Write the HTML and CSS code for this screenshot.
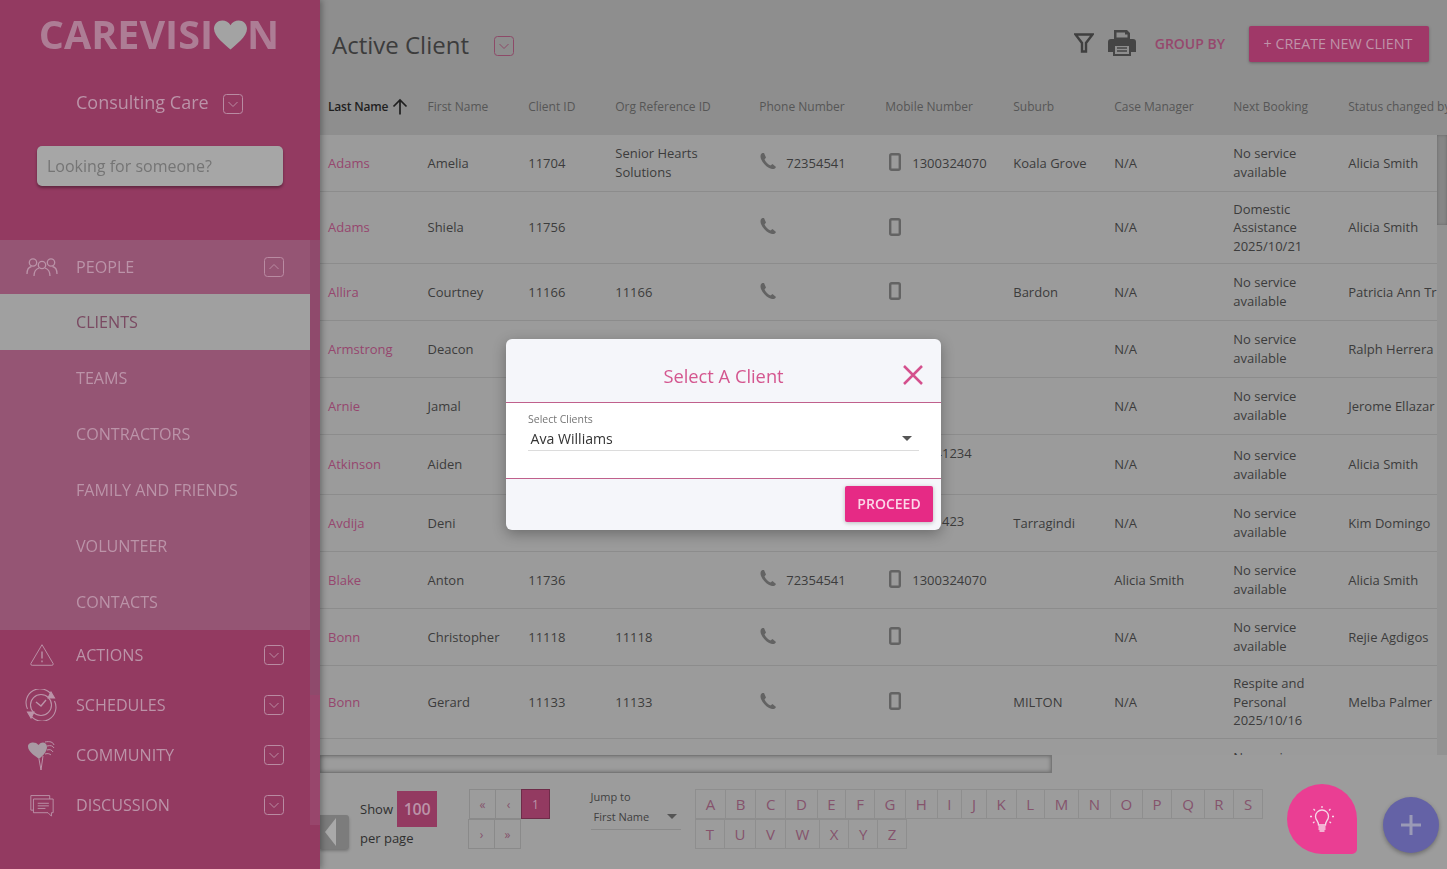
FILE: index.html
```html
<!DOCTYPE html>
<html lang="en">
<head>
<meta charset="utf-8">
<title>Active Client</title>
<link rel="stylesheet" href="styles.css">
</head>
<body>
<svg class="defs" width="0" height="0" aria-hidden="true">
  <symbol id="down" viewBox="0 0 20 20"><rect x=".5" y=".5" width="19" height="19" rx="3" fill="none" stroke="currentColor"/><path d="M5.5 8l4.500 4.500 4.500-4.500" fill="none" stroke="currentColor"/></symbol>
  <symbol id="up" viewBox="0 0 20 20"><rect x=".5" y=".5" width="19" height="19" rx="3" fill="none" stroke="currentColor"/><path d="M5.500 12l4.500-4.500 4.500 4.500" fill="none" stroke="currentColor"/></symbol>
  <symbol id="phone" viewBox="0 0 18 18"><path d="M3.500 1 C1.500 2 1 4 2 7 C4 12 8.500 16 13 17 C15 17.300 16.500 16.500 17 15 L13.500 12 L11.500 13.500 C9 12.500 6.500 10 5.500 7.500 L7 5.500 L5 1 Z" fill="currentColor"/></symbol>
  <symbol id="mobile" viewBox="0 0 12 18"><rect x="1.200" y="1.200" width="9.600" height="15.600" rx="1.500" fill="none" stroke="currentColor" stroke-width="2.400"/></symbol>
</svg>

<div class="app">
  <aside class="sidebar">
    <div class="logo">CAREVISI<svg class="logo-heart" viewBox="0 0 34 30"><path d="M17 30 C12 25 0 17 0 8.500 C0 3.500 4 0 8.500 0 C12 0 15.500 2 17 5 C18.500 2 22 0 25.500 0 C30 0 34 3.500 34 8.500 C34 17 22 25 17 30Z"/></svg>N</div>
    <div class="org"><span>Consulting Care</span><svg class="chev org-chev"><use href="#down"/></svg></div>
    <div class="search"><input class="search-input" type="text" placeholder="Looking for someone?"></div>
    <div class="nav-scroll">
      <nav class="nav">
        <div class="open-group">
          <div class="nav-row">
            <svg class="nav-icon" viewBox="0 0 32 20" fill="none" stroke="currentColor" stroke-width="1.300"><circle cx="7" cy="5.500" r="3.700"/><circle cx="16" cy="8" r="3.700"/><circle cx="25" cy="5.500" r="3.700"/><path d="M1 17c0-4 2-7 4.500-7.500M13 11c-3 1-5 4-5 8M19 11c3 1 5 4 5 8M31 17c0-4-2-7-4.500-7.500"/></svg>
            <span class="nav-label">PEOPLE</span><svg class="chev"><use href="#up"/></svg>
          </div>
          <a class="sub-row active">CLIENTS</a>
          <a class="sub-row">TEAMS</a>
          <a class="sub-row">CONTRACTORS</a>
          <a class="sub-row">FAMILY AND FRIENDS</a>
          <a class="sub-row">VOLUNTEER</a>
          <a class="sub-row">CONTACTS</a>
        </div>
        <div class="nav-row short">
          <svg class="nav-icon" viewBox="0 0 32 28" fill="none" stroke="currentColor" stroke-width="1.100"><path d="M16 2 L29 24 Q29.500 26 27.500 26 H4.500 Q2.500 26 3 24 Z"/><path d="M16 10v8M16 20.500v2" stroke-width="1.600"/></svg>
          <span class="nav-label">ACTIONS</span><svg class="chev"><use href="#down"/></svg>
        </div>
        <div class="nav-row short">
          <svg class="nav-icon tall clock" viewBox="0 0 32 32" fill="none" stroke="currentColor" stroke-width="1.100"><circle cx="16" cy="16" r="10.500"/><path d="M2.500 20A14 14 0 0 1 27 6.500M29.500 12A14 14 0 0 1 5 25.500"/><path d="M11 13l5 4 5-6" stroke-width="1.400"/><path d="M26 3l3.500 6-6.500 0zM6 29l-3.500-6 6.500 0z" fill="currentColor"/></svg>
          <span class="nav-label">SCHEDULES</span><svg class="chev"><use href="#down"/></svg>
        </div>
        <div class="nav-row short">
          <svg class="nav-icon tall" viewBox="0 0 32 32" fill="none" stroke="currentColor" stroke-width="1"><path class="balloon" d="M13 20C9.500 17 2 13 2 7.500 C2 3 9.500 2 12.500 6 C15.500 2 21 3 21 8 C21 13 16.500 17 13 20Z"/><path d="M19 3C24 2 27 3 28 6M21 7C25 6 27 7 28 9M21 11C24 10 26 11 27 13M19 15C22 14 24 15 25 16M13 20L15 31M17 17L15 31"/></svg>
          <span class="nav-label">COMMUNITY</span><svg class="chev"><use href="#down"/></svg>
        </div>
        <div class="nav-row short">
          <svg class="nav-icon" viewBox="0 0 32 28" fill="none" stroke="currentColor" stroke-width="1.100"><path d="M6 20H3V3H25V7"/><path d="M6 7H29V23H27V27L23 23H6Z"/><path d="M11 12H24M11 15H24M11 18H20"/></svg>
          <span class="nav-label">DISCUSSION</span><svg class="chev"><use href="#down"/></svg>
        </div>
      </nav>
      <div class="nav-track"><div class="nav-thumb"></div></div>
    </div>
  </aside>

  <main class="main">
    <header class="toolbar">
      <h1 class="title">Active Client</h1>
      <svg class="chev title-chev"><use href="#down"/></svg>
      <div class="tools">
        <svg class="filter" viewBox="0 0 20 20" fill="none" stroke="currentColor" stroke-width="2.400"><path d="M1.500 1.500H18.500L12 10V18.500H8V10Z"/></svg>
        <svg class="printer" viewBox="0 0 28 28"><path d="M6 1H19L22 4V10H6Z M8.500 3.500V8.500H19.500V5.500H17V3.500Z" fill="currentColor" fill-rule="evenodd"/><path d="M3 10H25Q28 10 28 13V23H23V27H5V23H0V13Q0 10 3 10Z M7 17V25H21V17Z" fill="currentColor" fill-rule="evenodd"/><path d="M9 19H19M9 22H19" stroke="currentColor" stroke-width="1.500"/></svg>
        <span class="group-by">GROUP BY</span>
        <button class="create">+ CREATE NEW CLIENT</button>
      </div>
    </header>

    <div class="row head">
      <div class="sorted">Last Name <svg class="arrow" viewBox="0 0 16 16" fill="none" stroke="currentColor" stroke-width="1.700"><path d="M8 16V1.500M1.500 8L8 1.500L14.500 8"/></svg></div>
      <div>First Name</div><div>Client ID</div><div>Org Reference ID</div><div>Phone Number</div><div>Mobile Number</div><div>Suburb</div><div>Case Manager</div><div>Next Booking</div><div>Status changed by</div>
    </div>

    <div class="table-area">
      <div class="rows">
        <div class="row"><a class="link">Adams</a><div>Amelia</div><div>11704</div><div>Senior Hearts<br>Solutions</div><div class="tel"><svg class="ic-phone"><use href="#phone"/></svg>72354541</div><div class="tel"><svg class="ic-mobile"><use href="#mobile"/></svg>1300324070</div><div>Koala Grove</div><div>N/A</div><div>No service<br>available</div><div>Alicia Smith</div></div>
        <div class="row r72"><a class="link">Adams</a><div>Shiela</div><div>11756</div><div></div><div class="tel"><svg class="ic-phone"><use href="#phone"/></svg></div><div class="tel"><svg class="ic-mobile"><use href="#mobile"/></svg></div><div></div><div>N/A</div><div>Domestic<br>Assistance<br>2025/10/21</div><div>Alicia Smith</div></div>
        <div class="row"><a class="link">Allira</a><div>Courtney</div><div>11166</div><div>11166</div><div class="tel"><svg class="ic-phone"><use href="#phone"/></svg></div><div class="tel"><svg class="ic-mobile"><use href="#mobile"/></svg></div><div>Bardon</div><div>N/A</div><div>No service<br>available</div><div>Patricia Ann Tr</div></div>
        <div class="row"><a class="link">Armstrong</a><div>Deacon</div><div></div><div></div><div></div><div class="tel"><svg class="ic-mobile"><use href="#mobile"/></svg></div><div></div><div>N/A</div><div>No service<br>available</div><div>Ralph Herrera</div></div>
        <div class="row"><a class="link">Arnie</a><div>Jamal</div><div></div><div></div><div></div><div></div><div></div><div>N/A</div><div>No service<br>available</div><div>Jerome Ellazar</div></div>
        <div class="row r60"><a class="link">Atkinson</a><div>Aiden</div><div></div><div></div><div></div><div class="tel raised"><svg class="ic-mobile"><use href="#mobile"/></svg>13341234</div><div></div><div>N/A</div><div>No service<br>available</div><div>Alicia Smith</div></div>
        <div class="row"><a class="link">Avdija</a><div>Deni</div><div></div><div></div><div></div><div class="tel raised-small"><svg class="ic-mobile"><use href="#mobile"/></svg>1341423</div><div>Tarragindi</div><div>N/A</div><div>No service<br>available</div><div>Kim Domingo</div></div>
        <div class="row"><a class="link">Blake</a><div>Anton</div><div>11736</div><div></div><div class="tel"><svg class="ic-phone"><use href="#phone"/></svg>72354541</div><div class="tel"><svg class="ic-mobile"><use href="#mobile"/></svg>1300324070</div><div></div><div>Alicia Smith</div><div>No service<br>available</div><div>Alicia Smith</div></div>
        <div class="row"><a class="link">Bonn</a><div>Christopher</div><div>11118</div><div>11118</div><div class="tel"><svg class="ic-phone"><use href="#phone"/></svg></div><div class="tel"><svg class="ic-mobile"><use href="#mobile"/></svg></div><div></div><div>N/A</div><div>No service<br>available</div><div>Rejie Agdigos</div></div>
        <div class="row r73"><a class="link">Bonn</a><div>Gerard</div><div>11133</div><div>11133</div><div class="tel"><svg class="ic-phone"><use href="#phone"/></svg></div><div class="tel"><svg class="ic-mobile"><use href="#mobile"/></svg></div><div>MILTON</div><div>N/A</div><div>Respite and<br>Personal<br>2025/10/16</div><div>Melba Palmer</div></div>
        <div class="row"><div></div><div></div><div></div><div></div><div></div><div></div><div></div><div></div><div>No service<br>available</div><div></div></div>
      </div>
      <div class="v-track"><div class="v-thumb"></div></div>
    </div>

    <div class="h-track"><div class="h-thumb"></div></div>

    <footer class="footer">
      <div class="per-page">
        <div class="show"><span>Show</span><span class="show-num">100</span></div>
        <div class="per-label">per page</div>
      </div>
      <div class="pager">
        <a class="pg w26">«</a><a class="pg w26">‹</a><a class="pg w28 on">1</a>
        <a class="pg w26 shift">›</a><a class="pg w26 shift">»</a>
      </div>
      <div class="jump">
        <div class="jump-label">Jump to</div>
        <div class="jump-select"><span>First Name</span><i class="caret"></i></div>
      </div>
      <div class="letters">
        <div class="letter-row"><a>A</a><a>B</a><a>C</a><a>D</a><a>E</a><a>F</a><a>G</a><a>H</a><a>I</a><a>J</a><a>K</a><a>L</a><a>M</a><a>N</a><a>O</a><a>P</a><a>Q</a><a>R</a><a>S</a></div>
        <div class="letter-row"><a>T</a><a>U</a><a>V</a><a>W</a><a>X</a><a>Y</a><a>Z</a></div>
      </div>
    </footer>
  </main>
</div>

<button class="collapse" aria-label="Collapse"><i class="tri"></i></button>
<button class="fab-add" aria-label="Add"><svg viewBox="0 0 24 24" fill="none" stroke="currentColor" stroke-width="3"><path d="M12 2V22M2 12H22"/></svg></button>
<button class="fab-tip" aria-label="Tips"><svg viewBox="0 0 28 28" fill="none" stroke="currentColor" stroke-width="1.300"><path d="M10.500 20C10.500 16 7.500 15 7.500 11.500A6.500 6.500 0 0 1 20.500 11.500C20.500 15 17.500 16 17.500 20Z"/><path d="M10.500 22H17.500M10.500 24H17.500M11.500 26H16.500M14 1V3M5.500 4L7 5.500M22.500 4L21 5.500M2 11.500H4M24 11.500H26M5 18L6.500 16.800M23 18L21.500 16.800"/></svg></button>

<div class="modal-layer">
  <section class="modal">
    <header class="modal-head">
      <h2 class="modal-title">Select A Client</h2>
      <svg class="modal-close" viewBox="0 0 20 20" fill="none" stroke="currentColor" stroke-width="2.500"><path d="M1 1L19 19M19 1L1 19"/></svg>
    </header>
    <div class="modal-body">
      <div class="field-label">Select Clients</div>
      <div class="field-value"><span>Ava Williams</span><i class="caret"></i></div>
    </div>
    <footer class="modal-foot"><button class="proceed">PROCEED</button></footer>
  </section>
</div>
</body>
</html>
```
FILE: styles.css
```css
* { box-sizing: border-box; }
html, body { margin: 0; height: 100%; overflow: hidden; }
body { font-family: "Open Sans", "Noto Sans", sans-serif; font-size: 13px; color: #3c3c3c; background: #9b9b9b; }
.defs { position: absolute; }
a { color: inherit; text-decoration: none; }
button { font-family: inherit; border: 0; padding: 0; }

.app { display: flex; height: 869px; }

/* sidebar */
.sidebar { width: 320px; flex: none; background: #933a61; color: #bb93a8; display: flex; flex-direction: column; box-shadow: 2px 0 6px rgba(0,0,0,.3); position: relative; z-index: 1; }
.logo { height: 68px; display: flex; align-items: center; justify-content: center; padding-right: 2px; font-size: 39.500px; font-weight: 700; color: #ad7d95; }
.logo-heart { width: 33px; height: 30px; fill: #a3a3a3; margin-top: 1px; margin-left: 1px; }
.org { height: 68px; display: flex; align-items: center; gap: 14px; padding-left: 76px; font-size: 18px; }
.chev { width: 20px; height: 20px; flex: none; color: #b98ba2; }
.org-chev { margin-top: 3px; }
.search { height: 104px; padding: 10px 37px 0; }
.search-input { width: 246px; height: 40px; border: 0; border-radius: 5px; background: #a6a6a6; box-shadow: 0 2px 3px rgba(0,0,0,.35); padding: 0 10px; font: 16px "Open Sans", sans-serif; outline: 0; }
.search-input::placeholder { color: #757575; opacity: 1; }
.nav-scroll { display: flex; height: 585px; }
.nav { width: 310px; flex: none; }
.nav-track { width: 10px; background: #98466c; }
.nav-thumb { height: 455px; background: #8f4a6c; }
.open-group { background: #955574; }
.nav-row { height: 54px; display: flex; align-items: center; padding: 0 26px; font-size: 16.150px; }
.nav-row.short { height: 50px; }
.nav-icon { width: 32px; height: 24px; margin-right: 18px; flex: none; color: #bb93a8; }
.nav-icon.tall { height: 32px; }
.clock { margin-left: -1px; margin-right: 19px; }
.balloon { fill: #a89aa3; stroke: none; }
.nav-label { flex: 1; }
.sub-row { display: flex; align-items: center; height: 56px; padding-left: 76px; font-size: 16.150px; }
.sub-row.active { background: #a0a0a0; color: #7a4a62; }

/* main */
.main { flex: 1; min-width: 0; display: flex; flex-direction: column; background: #9c9c9c; }
.toolbar { height: 80px; flex: none; background: #8e8e8e; display: flex; align-items: center; padding: 10px 18px 0 12px; }
.title { margin: -2px 0 0; font-size: 24px; font-weight: 400; color: #3c3c3c; }
.title-chev { margin-left: 25px; margin-top: 1px; color: #8d4a68; }
.tools { margin-left: auto; display: flex; align-items: center; margin-top: -2px; }
.filter { width: 20px; height: 20px; color: #3f3f3f; margin-right: 14px; margin-top: -2px; }
.printer { width: 28px; height: 28px; color: #454545; margin-top: -2px; }
.group-by { margin-left: 19px; margin-top: -2px; font-size: 14px; font-weight: 600; color: #96486d; }
.create { margin-left: 24px; width: 180px; height: 36px; padding: 0 2px 2px 0; border-radius: 2px; background: #a03868; color: #bf93a9; font-size: 14.300px; box-shadow: 0 1px 3px rgba(0,0,0,.3); }

.row { display: grid; grid-template-columns: 107.500px 100.750px 87px 144px 126px 128px 101px 119px 115px 140px; align-items: center; height: 57px; width: 1127px; border-bottom: 1px solid #8c8c8c; line-height: 1.430; white-space: nowrap; }
.row > :first-child { padding-left: 8px; }
.row.head { height: 55px; flex: none; background: #8e8e8e; border: 0; font-size: 12px; color: #565656; padding-bottom: 2px; }
.row.r72 { height: 72px; }
.row.r73 { height: 73px; }
.row.r60 { height: 60px; }
.sorted { color: #1f1f1f; font-weight: 600; letter-spacing: -.2px; display: flex; align-items: center; gap: 4px; }
.arrow { width: 16px; height: 17px; }
.link { color: #96466e; }

.table-area { height: 620px; flex: none; display: flex; overflow: hidden; background: #9b9b9b; }
.rows { width: 1117px; flex: none; overflow: hidden; }
.tel { display: flex; align-items: center; }
.raised { padding-bottom: 22px; }
.raised-small { padding-bottom: 4px; }
.ic-phone { width: 18px; height: 18px; color: #636363; margin: -3px 9px 0 0; flex: none; }
.ic-mobile { width: 12px; height: 18px; color: #636363; margin: -2px 11px 0 4px; flex: none; }
.v-track { width: 10px; background: #929292; }
.v-thumb { height: 90px; background: #868686; box-shadow: inset 0 0 3px rgba(0,0,0,.25); }

.h-track { height: 18px; flex: none; }
.h-thumb { width: 732px; height: 18px; border: 1px solid #777; border-left: 0; background: #9c9c9c; box-shadow: inset 0 0 4px rgba(0,0,0,.35); }

.footer { flex: 1; display: flex; align-items: flex-start; padding: 16px 0 0 40px; }
.per-page { width: 108px; padding-top: 2px; font-size: 13px; color: #2f2f2f; }
.show { display: flex; align-items: center; gap: 4px; }
.show-num { width: 40px; height: 36px; display: flex; align-items: center; justify-content: center; background: #933a61; color: #bb93a8; font-size: 16px; font-weight: 600; letter-spacing: -.3px; }
.per-label { margin-top: 1px; line-height: 20px; }
.pager { width: 80px; margin-left: 1px; display: flex; flex-wrap: wrap; }
.pg { height: 30px; display: flex; align-items: center; justify-content: center; border: 1px solid #8a8a8a; margin-right: -1px; color: #85536c; font-size: 12px; }
.w26 { width: 27px; }
.w28 { width: 29px; }
.on { background: #933a61; color: #bb93a8; border-color: #6e2c49; }
.shift { margin-left: -1px; margin-right: 0; }
.shift + .shift { margin-left: -1px; }
.jump { width: 90px; margin-left: 41.500px; font-size: 11px; color: #3f3f3f; }
.jump-label { line-height: 16px; }
.jump-select { display: flex; align-items: center; justify-content: space-between; height: 25px; padding: 0 4px 2px 3px; border-bottom: 1px solid #8a8a8a; }
.caret { width: 0; height: 0; border: 5px solid transparent; border-top: 5px solid #555; border-bottom: 0; }
.letters { margin-left: 14.500px; }
.letter-row { display: flex; }
.letter-row a { height: 30px; padding: 0 9.750px; border: 1px solid #8e8e8e; margin-right: -1px; display: flex; align-items: center; font-size: 15px; color: #85536c; }

/* floats */
.collapse { position: absolute; left: 320px; top: 815px; width: 29px; height: 34px; background: #7c7c7c; border-radius: 0 3px 3px 0; box-shadow: 0 2px 3px rgba(0,0,0,.25); }
.tri { position: absolute; left: 5px; top: 3px; border: 14px solid transparent; border-right: 11px solid #a9a9a9; border-left: 0; }
.fab-add { position: absolute; left: 1383px; top: 797px; width: 56px; height: 56px; border-radius: 50%; background: #6462a6; color: #9a9ab6; box-shadow: 0 2px 4px rgba(0,0,0,.3); display: flex; align-items: center; justify-content: center; }
.fab-add svg { width: 24px; height: 24px; }
.fab-tip { position: absolute; left: 1287px; top: 784px; width: 70px; height: 70px; border-radius: 50% 50% 5px 50%; background: #ea3e93; color: #f6d9e8; display: flex; align-items: center; justify-content: center; }
.fab-tip svg { width: 28px; height: 28px; }

/* modal */
.modal-layer { position: fixed; inset: 0; display: flex; align-items: center; justify-content: center; }
.modal { width: 435px; height: 191px; border-radius: 6px; overflow: hidden; background: #f5f6fa; box-shadow: 0 4px 14px rgba(0,0,0,.3); display: flex; flex-direction: column; }
.modal-head { height: 64px; flex: none; display: flex; align-items: center; justify-content: center; position: relative; border-bottom: 1px solid #c0608c; padding-top: 10px; }
.modal-title { margin: 0; font-size: 18.300px; font-weight: 400; color: #d4568f; }
.modal-close { position: absolute; right: 18px; top: 26px; width: 20px; height: 20px; color: #d4508d; }
.modal-body { height: 76px; flex: none; background: #fff; border-bottom: 1px solid #c0608c; padding: 9px 22px 0; }
.field-label { font-size: 10.500px; line-height: 14px; color: #757575; }
.field-value { display: flex; align-items: center; justify-content: space-between; height: 25px; padding: 0 7px 0 2.500px; border-bottom: 1px solid #dcdcdc; font-size: 14.100px; color: #333; }
.modal-foot { flex: 1; display: flex; justify-content: flex-end; padding: 7px 8px 0 0; }
.proceed { width: 88px; height: 36px; padding-bottom: 2px; border-radius: 2px; background: #e62a85; color: #fbd7e8; font-size: 14px; font-weight: 600; box-shadow: 0 1px 4px rgba(0,0,0,.25); }
```
